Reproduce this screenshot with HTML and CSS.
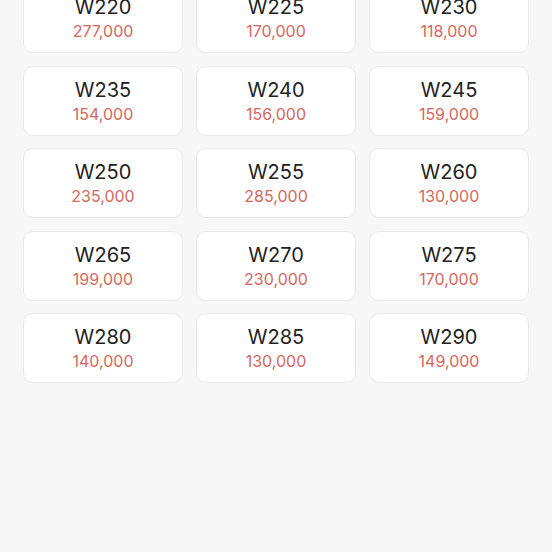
FILE: index.html
```html
<!DOCTYPE html>
<html lang="ko">
<head>
<meta charset="utf-8">
<link rel="stylesheet" href="styles.css">
</head>
<body>
<div class="grid">
  <div class="card"><div class="size">W220</div><div class="price">277,000</div></div>
  <div class="card"><div class="size">W225</div><div class="price">170,000</div></div>
  <div class="card"><div class="size">W230</div><div class="price">118,000</div></div>
  <div class="card"><div class="size">W235</div><div class="price">154,000</div></div>
  <div class="card"><div class="size">W240</div><div class="price">156,000</div></div>
  <div class="card"><div class="size">W245</div><div class="price">159,000</div></div>
  <div class="card"><div class="size">W250</div><div class="price">235,000</div></div>
  <div class="card"><div class="size">W255</div><div class="price">285,000</div></div>
  <div class="card"><div class="size">W260</div><div class="price">130,000</div></div>
  <div class="card"><div class="size">W265</div><div class="price">199,000</div></div>
  <div class="card"><div class="size">W270</div><div class="price">230,000</div></div>
  <div class="card"><div class="size">W275</div><div class="price">170,000</div></div>
  <div class="card"><div class="size">W280</div><div class="price">140,000</div></div>
  <div class="card"><div class="size">W285</div><div class="price">130,000</div></div>
  <div class="card"><div class="size">W290</div><div class="price">149,000</div></div>
</div>
</body>
</html>
```
FILE: styles.css
```css
html, body {
  margin: 0;
  padding: 0;
  background: #f7f7f7;
  font-family: Inter, "Liberation Sans", sans-serif;
  height: 100%;
  overflow: hidden;
}
.grid {
  display: grid;
  grid-template-columns: repeat(3, 160px);
  column-gap: 13px;
  row-gap: 12.6px;
  padding: 0 23px;
  margin-top: -17px;
}
.card {
  box-sizing: border-box;
  height: 70px;
  background: #fff;
  border: 1px solid #e9e9e9;
  border-radius: 10px;
  display: flex;
  flex-direction: column;
  align-items: center;
  justify-content: center;
}
.size {
  font-size: 20px;
  line-height: 24px;
  color: #222;
  margin-bottom: 2px;
}
.price {
  font-size: 16px;
  line-height: 20px;
  color: #d4675f;
}
```
